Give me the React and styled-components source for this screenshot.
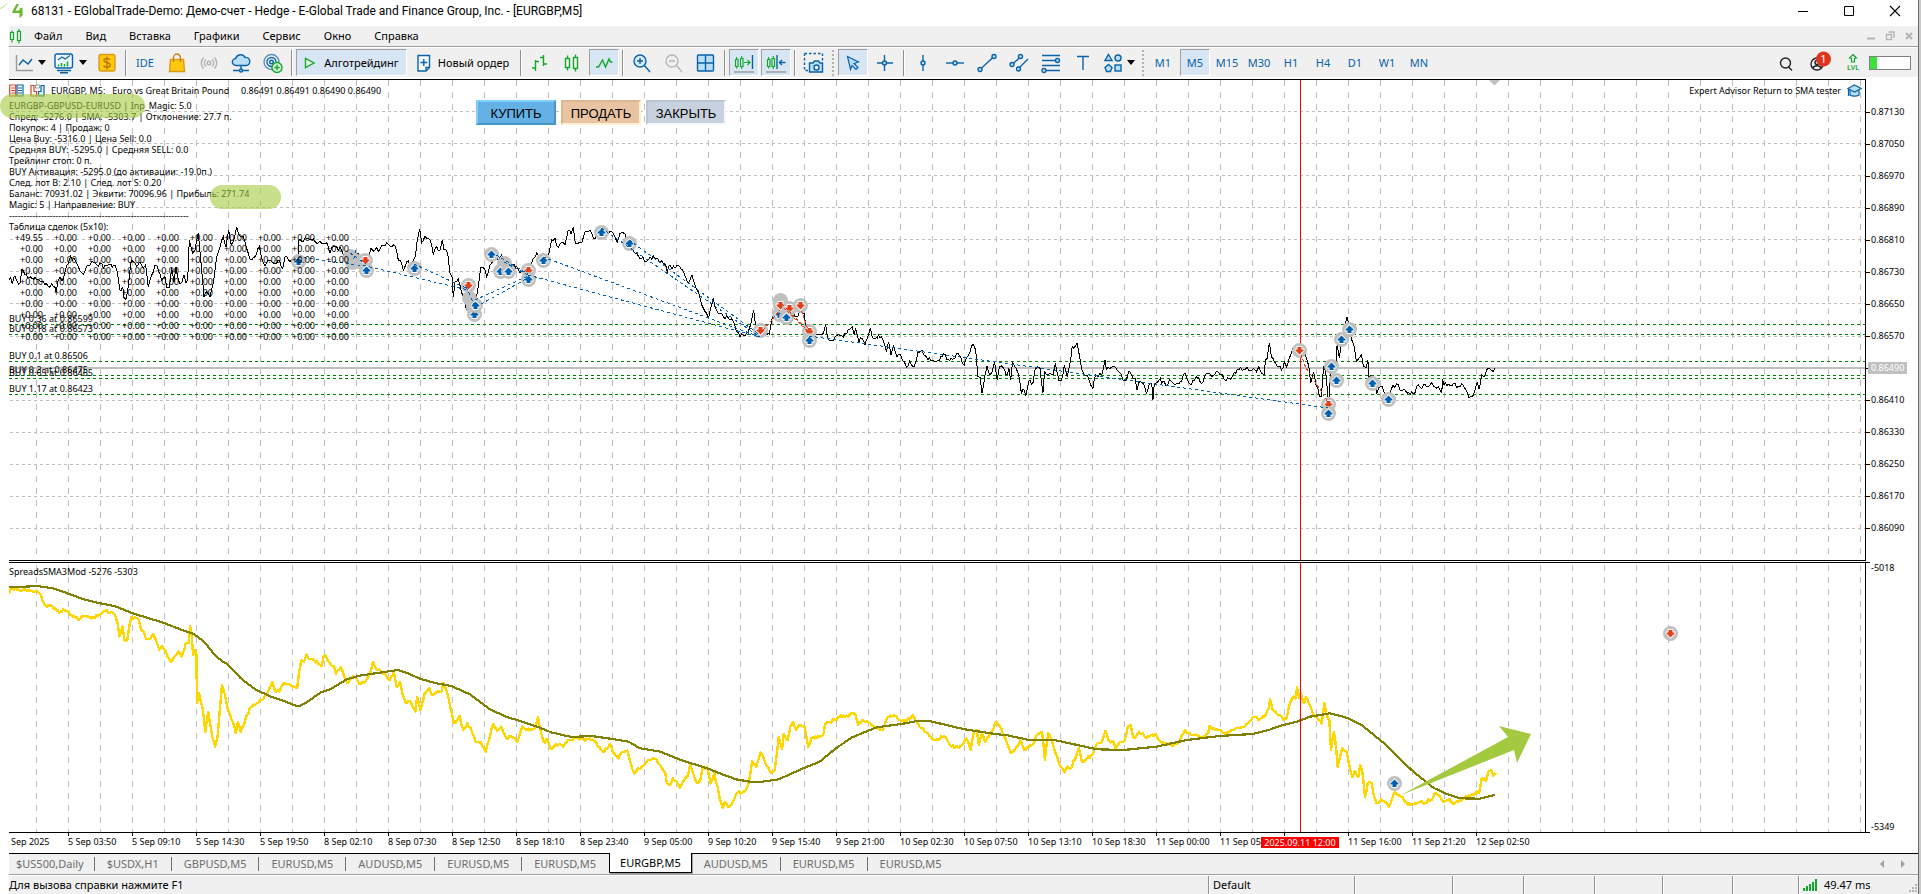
import React from 'react';
import styled, { createGlobalStyle, css } from 'styled-components';

const UI = '"Noto Sans", "Open Sans", sans-serif';
const BLUE = '#0a62a9';
const SKY = '#b9def5';
const GREEN = '#12a82b';
const GRID = '#c0c0c0';

const GlobalStyle = createGlobalStyle`
  *, *::before, *::after { box-sizing: border-box; }
  body { margin: 0; background: #fff; color: #000; font: 11px/16px ${UI}; }
  button { font: inherit; color: inherit; margin: 0; padding: 0; border: 0; background: none; white-space: nowrap; }
  svg { display: block; flex: none; }
`;

/* ---------- window frame ---------- */

const Window = styled.div`
  display: flex;
  flex-direction: column;
  min-height: 100vh;
  padding-left: 9px;
  border-right: 2px solid #c9c9c9;
  overflow: hidden;
`;

const Inner = styled.div`
  display: flex;
  flex-direction: column;
  flex: 1;
  min-width: 0;
  border-right: 1px solid #6e6e6e;
`;

const TitleBar = styled.header`
  position: relative;
  display: flex;
  align-items: center;
  height: 26px;
  padding: 0 0 4px 3px;
  gap: 8px;
  font: 12px/16px Roboto, sans-serif;
`;

const Title = styled.h1`
  flex: 1;
  margin: 0;
  font: inherit;
  white-space: nowrap;
`;

const Stroke = styled.svg`
  position: absolute;
  left: -9px;
  top: 3px;
`;

const FrameButtons = styled.div`
  display: flex;
`;

const FrameButton = styled.button`
  display: flex;
  align-items: center;
  justify-content: center;
  width: ${(p) => (p.$small ? 19 : 46)}px;
  height: 20px;
`;

const MenuBar = styled.nav`
  display: flex;
  align-items: center;
  height: 21px;
  gap: 23px;
  background: #f0f0f0;
  border-bottom: 1px solid #a0a0a0;

  svg + button { margin-left: -11px; }
  > div { margin-left: auto; }
`;

/* ---------- toolbar ---------- */

const ToolBar = styled.div`
  display: flex;
  align-items: center;
  gap: 2px;
  height: 30px;
  margin-bottom: 2px;
  padding-left: 3px;
  background: #f0f0f0;
  border-top: 1px solid #fff;
  color: ${BLUE};
`;

const Tool = styled.button`
  display: flex;
  align-items: center;
  justify-content: center;
  gap: ${(p) => p.$gap ?? 5}px;
  flex: none;
  width: ${(p) => p.$w ?? 30}px;
  height: 27px;
  border: 1px solid transparent;
  color: ${(p) => (p.$dark ? '#000' : BLUE)};
  ${(p) =>
    p.$on &&
    css`
      background: #d8e5f2;
      border-color: #a0a0a0 #fff #fff #a0a0a0;
    `}
`;

const Divider = styled.span`
  flex: none;
  width: 4px;
  height: 26px;
  background: linear-gradient(90deg, transparent 1px, #909090 1px, #909090 2px, #fff 2px, #fff 3px, transparent 3px);
`;

const Grip = styled.span`
  flex: none;
  width: 5px;
  height: 26px;
  border-left: 2px dotted #b4b4b4;
  margin-left: 1px;
  margin-right: -1px;
`;

const Caret = styled.span`
  border: 4px solid transparent;
  border-top: 5px solid #000;
  border-bottom: 0;
`;

const Account = styled.div`
  display: flex;
  align-items: center;
  gap: 7px;
  margin-left: auto;
  padding-right: 7px;
`;

const Meter = styled.span`
  width: 42px;
  height: 14px;
  border: 1px solid #808080;
  background: linear-gradient(90deg, #3ee03e 7px, #fff 7px);
`;

/* ---------- chart ---------- */

const Charts = styled.main`
  display: flex;
  flex-direction: column;
  flex: 1;
  font-size: 9px;
  line-height: 11px;
  white-space: pre;
`;

const PaneRow = styled.section`
  display: flex;
  flex: ${(p) => p.$size} 0 ${(p) => p.$size}px;
  margin-bottom: ${(p) => p.$gap ?? 0}px;
`;

const Pane = styled.div`
  position: relative;
  flex: 1;
  min-width: 0;
  border: solid #000;
  border-width: 1px 1px 1px 0;
`;

const Canvas = styled.svg`
  position: absolute;
  inset: 0;
  width: 100%;
  height: 100%;
`;

const Front = styled.div`
  position: relative;
  padding-top: ${(p) => p.$top ?? 0}px;
`;

const PaneHead = styled.div`
  display: flex;
  align-items: center;
  height: 20px;
  gap: 6px;
  padding-right: 3px;

  > :nth-child(4) { margin-left: auto; }
`;

const InfoLine = styled.p`
  margin: 0;
`;

const DealTable = styled.table`
  border-collapse: collapse;
  td { width: 34px; padding: 0; line-height: 11px; text-align: right; }
`;

const TradeButtons = styled.div`
  position: absolute;
  left: 467px;
  top: 20px;
  display: flex;
  gap: 5px;
`;

const tones = {
  buy: ['#63b1e5', '#7fd0ff', '#4795c9'],
  sell: ['#e8c4a2', '#dfb78f', '#fff1cf'],
  close: ['#c8d2de', '#b9c6d6', '#f4f8fc'],
};

const TradeButton = styled.button`
  width: 80px;
  height: 25px;
  padding-top: 3px;
  border: 2px solid;
  background: ${(p) => tones[p.$tone][0]};
  border-color: ${(p) => `${tones[p.$tone][1]} ${tones[p.$tone][2]} ${tones[p.$tone][2]} ${tones[p.$tone][1]}`};
  font: 13px/18px "Liberation Sans", Arial, sans-serif;
`;

const Highlight = styled.span`
  position: absolute;
  left: ${(p) => p.$x}px;
  top: ${(p) => p.$y}px;
  width: ${(p) => p.$w}px;
  height: 24px;
  border-radius: 12px;
  background: rgba(163, 202, 63, 0.6);
`;

const Scale = styled.div`
  display: flex;
  flex-direction: column;
  flex: none;
  width: 52px;
  padding-top: ${(p) => (p.$ends ? 0 : 17)}px;
  justify-content: ${(p) => (p.$ends ? 'space-between' : 'flex-start')};
`;

const Price = styled.div`
  display: flex;
  align-items: center;
  height: ${(p) => (p.$end ? 12 : 32)}px;

  &::before {
    content: '';
    width: ${(p) => (p.$now ? 2 : 4)}px;
    height: 1px;
    background: #000;
    align-self: ${(p) => p.$end ?? 'center'};
  }
  span {
    padding: 0 ${(p) => (p.$now ? 3 : 1)}px;
    line-height: 12px;
    ${(p) => p.$now && 'background: #c0c0c0; color: #fff;'}
  }
`;

const TimeAxis = styled.div`
  position: relative;
  display: flex;
  flex: none;
  height: 20px;
  overflow: hidden;
`;

const Time = styled.span`
  flex: none;
  width: ${(p) => (p.$first ? 59 : 64)}px;
  padding-left: ${(p) => (p.$first ? 2 : 0)}px;

  &::before {
    content: '';
    display: block;
    width: 1px;
    height: 3px;
    background: ${(p) => (p.$first ? 'none' : '#000')};
  }
`;

const CursorTime = styled.span`
  position: absolute;
  left: 1252px;
  top: 4px;
  width: 78px;
  text-align: center;
  background: #f00;
  color: #fff;
`;

/* ---------- bottom bars ---------- */

const Tabs = styled.div`
  display: flex;
  align-items: center;
  height: 23px;
  padding-bottom: 2px;
  background: #f0f0f0;
  border-top: 1px solid #000;
  border-bottom: 1px solid #fff;
  box-shadow: inset 0 -1px #a0a0a0;
  color: #6d6d6d;
`;

const Tab = styled.button`
  height: 14px;
  line-height: 14px;
  padding: 0 12px;
  border-right: 1px solid #6d6d6d;

  &:first-child { padding: 0 10px 0 7px; }

  ${(p) =>
    p.$plain &&
    css`
      border-right-color: transparent;
    `}
  ${(p) =>
    p.$on &&
    css`
      align-self: flex-start;
      height: 20px;
      line-height: 18px;
      margin-top: -1px;
      padding: 0 10px;
      background: #fff;
      color: #000;
      border: solid #000;
      border-width: 0 1px 1px;
      box-shadow: 1px 1px #a0a0a0;
    `}
`;

const TabArrows = styled.div`
  display: flex;
  gap: 17px;
  margin-left: auto;
  padding-right: 13px;
`;

const StatusBar = styled.footer`
  display: flex;
  align-items: stretch;
  height: 18px;
  background: #f0f0f0;
  line-height: 18px;
  white-space: nowrap;
`;

const Cell = styled.div`
  position: relative;
  display: flex;
  align-items: center;
  gap: 6px;
  flex: ${(p) => (p.$w ? `0 0 ${p.$w}px` : '1')};
  padding-left: 4px;
  border-left: ${(p) => (p.$w ? '1px solid #909090' : '0')};
  box-shadow: ${(p) => (p.$w ? 'inset 1px 0 #fff' : 'none')};
  ${(p) => !p.$w && 'padding-left: 0;'}

  > :nth-child(3) { margin-left: auto; align-self: flex-end; }
`;

/* ---------- icons ---------- */

function Icon({ w = 22, h = 22, children }) {
  return (
    <svg width={w} height={h} viewBox={`0 0 ${w} ${h}`} fill="none" stroke={BLUE} strokeWidth="1.4" aria-hidden="true">
      {children}
    </svg>
  );
}

const icons = {
  chart: (
    <Icon w={18}>
      <path d="M1.5 3v15.5H18" stroke="#9a9a9a" />
      <path d="M4 13l4-5 5 4 4-5" />
    </Icon>
  ),
  template: (
    <Icon w={20}>
      <rect x="1" y="2" width="17.5" height="14" rx="2" fill="#eef7fd" />
      <path d="M4 8l4-3 3 2 5-3.5" strokeWidth="1.1" />
      <path d="M4.5 14.500v-2M7.500 14.500v-3.500M10.500 14.500v-2.500M13.500 14.500V9.500" stroke={GREEN} strokeWidth="1.5" />
      <path d="M3 18.500h14M6 20.800h8" />
    </Icon>
  ),
  dollar: (
    <Icon w={18}>
      <rect x="1" y="2.5" width="16" height="16.5" rx="2" fill="#ffc70f" stroke="#d99a1b" />
      <path d="M12 8c-.5-1.200-1.600-1.700-3-1.700-1.700 0-3 .8-3 2.200 0 3.200 6.200 1.200 6.200 4.500 0 1.500-1.400 2.300-3.200 2.300-1.600 0-2.900-.7-3.200-2M9 4.500v13" stroke="#b87400" strokeWidth="1.3" />
    </Icon>
  ),
  bag: (
    <Icon w={18}>
      <path d="M2.500 7.500h13l1 12h-15z" fill="#ffc70f" stroke="#d99a1b" />
      <path d="M5.500 10V6a3.500 4 0 0 1 7 0v4" stroke="#c98212" />
    </Icon>
  ),
  signal: (
    <Icon w={20}>
      <g stroke="#b2b2b2">
        <circle cx="10" cy="11" r="1.800" />
        <path d="M6.800 7.500a5 5 0 0 0 0 7M13.200 7.500a5 5 0 0 1 0 7M4.500 5.500a8 8 0 0 0 0 11M15.500 5.500a8 8 0 0 1 0 11" />
      </g>
    </Icon>
  ),
  cloud: (
    <Icon w={20}>
      <path d="M5 13.500a3.500 3.500 0 0 1-.3-7A5 5 0 0 1 14 5.500a4 4 0 0 1 1.500 8z" fill={SKY} />
      <path d="M10 13.500V17M2 18.500h16" />
      <circle cx="10" cy="18.500" r="1.500" fill={SKY} />
    </Icon>
  ),
  vps: (
    <Icon w={20}>
      <circle cx="8.500" cy="10" r="7.500" stroke="#5a8fb8" />
      <circle cx="8.500" cy="10" r="4.500" fill="#e8f4fc" />
      <circle cx="8.500" cy="10" r="1.800" />
      <circle cx="14" cy="15.500" r="5" fill="#dff6e2" stroke={GREEN} />
      <path d="M14 12.800v5.400M11.300 15.500h5.400" stroke={GREEN} />
    </Icon>
  ),
  play: (
    <Icon w={12}>
      <path d="M1.500 6.500v9l8.500-4.500z" stroke={GREEN} fill="#e6f8e8" />
    </Icon>
  ),
  order: (
    <Icon w={14}>
      <path d="M1 3.500h11.500v12l-3.500 3.500H1z" fill="#f4fafe" />
      <path d="M12.500 15.500H9V19M6.800 7v7M3.300 10.500h7" />
    </Icon>
  ),
  bars: (
    <Icon w={18}>
      <path d="M4.500 8v11M1 16h3.500M4.500 9.500H8M12.500 3v11M9 5.500h3.500M12.500 12H16" stroke={GREEN} />
    </Icon>
  ),
  candles: (
    <Icon w={16}>
      <g stroke={GREEN}>
        <rect x="1.500" y="6.500" width="4" height="9" />
        <path d="M3.500 3.500v3M3.500 15.500v3M11.500 2.500v3M11.500 16.500v3" />
        <rect x="9.500" y="5.500" width="4" height="11" />
      </g>
    </Icon>
  ),
  line: (
    <Icon w={20}>
      <path d="M2 15h2.500l4-7 3 7 3.500-8 1.500 3h2" stroke={GREEN} />
    </Icon>
  ),
  zoomIn: (
    <Icon w={20}>
      <circle cx="8" cy="9" r="6" fill="#d5ecfa" />
      <path d="M12.500 13.500L18 20M8 6v6M5 9h6" />
    </Icon>
  ),
  zoomOut: (
    <Icon w={20}>
      <g stroke="#b8b8b8">
        <circle cx="8" cy="9" r="6" />
        <path d="M12.500 13.500L18 20M5 9h6" />
      </g>
    </Icon>
  ),
  tile: (
    <Icon w={20}>
      <rect x="1.500" y="3" width="16" height="16" rx="1" fill={SKY} />
      <path d="M9.500 3v16M1.500 11h16" />
    </Icon>
  ),
  scroll: (
    <Icon w={20}>
      <path d="M1.500 7.500h2.500v7H1.500zM6.500 6.500H9v8H6.500zM2.700 5v2.500M2.700 14.500v2M7.700 4v2.500M7.700 14.500V17M10 10.500h6M13.500 8l2.500 2.500-2.500 2.500" stroke={GREEN} strokeWidth="1.2" />
      <path d="M18.500 3v14" />
      <path d="M0 20h20" stroke="#9a9a9a" />
    </Icon>
  ),
  shift: (
    <Icon w={20}>
      <path d="M1.500 7.500h2.500v7H1.500zM6 6.500h2.500v8H6zM2.700 5v2.500M2.700 14.500v2M7.200 4v2.500M7.200 14.500V17" stroke={GREEN} strokeWidth="1.2" />
      <path d="M11 3v14M13.500 10.500h6M16 8l-2.500 2.500 2.500 2.500" />
      <path d="M0 20h20" stroke="#9a9a9a" />
    </Icon>
  ),
  camera: (
    <Icon w={22}>
      <path d="M1.500 1.500h18v8M1.500 1.500v17h4" strokeDasharray="2.500 2" />
      <path d="M6.500 11h3.500l1.500-2h4l1.500 2h2.500v9h-13z" fill={SKY} />
      <circle cx="13.500" cy="15.500" r="2.500" fill="#fff" />
    </Icon>
  ),
  cursor: (
    <Icon w={16}>
      <path d="M2.500 4.500l11 5.500-4.500 1.500 4 4-2 2-4-4-1.500 4z" fill={SKY} strokeWidth="1.2" />
    </Icon>
  ),
  cross: (
    <Icon w={18}>
      <path d="M8.500 3v6M8.500 13v6M1 11h5.500M10.500 11H17" />
      <circle cx="8.500" cy="11" r="2" fill={SKY} />
    </Icon>
  ),
  vline: (
    <Icon w={8}>
      <path d="M4 3v16" />
      <circle cx="4" cy="11" r="2" fill={SKY} />
    </Icon>
  ),
  hline: (
    <Icon w={20}>
      <path d="M1 11h18" />
      <circle cx="10" cy="11" r="2" fill={SKY} />
    </Icon>
  ),
  trend: (
    <Icon w={20}>
      <path d="M3 17.500L17 4.500" />
      <circle cx="3" cy="17.500" r="2" fill={SKY} />
      <circle cx="17" cy="4.500" r="2" fill={SKY} />
    </Icon>
  ),
  channel: (
    <Icon w={20}>
      <path d="M3 12.500L12 4.500M8 18L19 7" />
      <circle cx="3" cy="12.500" r="2" fill={SKY} />
      <circle cx="11.500" cy="4.500" r="2" fill={SKY} />
      <circle cx="9.500" cy="17" r="2" fill={SKY} />
    </Icon>
  ),
  fibo: (
    <Icon w={20}>
      <path d="M1 3.500h18M1 8.500h14M1 13.500h18M5 18.500h14" />
      <circle cx="16.500" cy="8.500" r="2" fill={SKY} />
      <circle cx="3" cy="18.500" r="2" fill={SKY} />
    </Icon>
  ),
  text: (
    <Icon w={16}>
      <path d="M2 4.500h12M8 4.500V18" />
    </Icon>
  ),
  shapes: (
    <Icon w={18}>
      <path d="M4.500 2.500L8 8.500H1zM4.500 12.500L8 15.500 6.500 19.500h-4L1 15.500z" fill={SKY} />
      <circle cx="14" cy="6" r="3" fill={SKY} />
      <rect x="11" y="13" width="6" height="6" fill={SKY} />
    </Icon>
  ),
};

/* ---------- chart data ---------- */

// Each chunk: [originX, originY, unitsPerPxX, unitsPerPxY, "x,y x,y ..."]
const priceChunks = [
  [9, 200, 3, 3, '0,240 5,232 10,252 18,228 25,246 33,248 39,208 48,225 68,235 78,232 91,240 103,245 120,262 128,250 138,262 141,275 148,240 163,238 173,195 185,168 190,180 198,180 208,200 223,222 235,195 248,185 263,195 278,190 283,205 298,195 318,195 325,215 333,270 341,260 345,292 351,298 358,260 365,190 373,185 383,200 393,185 403,205 410,195 418,262 428,225 438,195 448,210 458,240 468,230 473,262 481,262 488,205 495,245 501,200 508,240 518,248 525,225 531,250 536,240 541,120 551,160 558,150 568,100 576,190 585,290 593,275 603,290 613,250 623,170 633,140 643,110 651,140 659,90 665,130 673,125 683,80 689,105 703,110 718,160 728,180 738,170 751,140 758,175 768,198 778,180 793,190 808,180 821,205 828,170 843,185 858,185 868,190 870,120 878,125 893,115 908,120 918,125 933,122 953,128 963,160 973,140 988,150 998,150 1008,175 1023,180 1048,160 1068,200 1078,165 1086,145 1098,150'],
  [380, 210, 3, 3, '0,118 10,105 20,97 30,108 45,108 55,150 65,160 70,182 80,155 90,165 100,150 106,140 112,90 119,58 125,98 135,78 150,90 160,135 170,110 180,120 187,90 192,120 203,130 210,190 216,200 220,262 225,215 235,208 240,225 250,260 262,300 275,300 285,275 295,230 302,172 315,180 320,200 330,165 340,145 355,150 365,135 372,150 390,160 410,170 420,190 435,185 450,170 460,145 470,128 480,135 495,150 507,130 515,90 525,85 530,108 545,98 555,105 565,60 573,72 580,52 586,100 600,98 605,98 615,65 630,60 640,85 655,75 670,55 680,70 695,65 705,82 712,97 720,70 730,68 740,90 755,110 770,130 785,145 798,155 810,140 825,145 840,158 850,160 862,185 868,165 885,175 900,170 912,190 920,210 928,215 936,195 945,225 955,245 965,285 975,305 985,328 995,285 1000,265 1005,290 1020,310 1030,320 1040,318 1050,330 1060,335 1068,360 1080,380 1090,375 1095,378 1105,365 1115,330 1121,300 1126,340 1140,370 1155,378 1168,372 1175,330 1190,310 1205,270 1220,300 1235,300 1250,320 1260,300 1272,310 1280,360 1300,370 1320,372 1330,370 1337,345 1342,378 1352,392 1365,380 1375,374 1385,378 1395,370 1405,358'],
  [850, 280, 2.8, 3, '0,148 6,140 12,165 15,145 25,185 35,175 42,195 50,170 57,145 65,175 80,165 92,180 102,215 108,185 115,225 122,195 132,230 142,225 152,245 158,262 167,245 172,255 180,260 190,218 202,212 215,232 230,242 240,245 250,242 262,222 275,238 290,235 298,222 310,232 320,255 335,220 345,193 352,210 358,290 364,292 370,340 378,285 384,258 392,285 398,275 405,245 412,300 418,262 428,262 437,285 445,265 450,300 455,245 465,265 475,300 480,340 488,330 492,348 500,305 512,310 518,270 525,260 532,265 540,340 545,275 555,285 568,285 575,250 585,300 592,300 600,255 608,290 618,240 622,200 630,200 636,190 642,225 650,270 658,285 665,285 672,310 680,325 688,285 695,290 705,285 714,240 718,268 732,262 745,265 758,280 765,302 775,295 780,275 788,285 798,295 804,330 812,302 822,310 830,340 838,310 845,310 848,360 852,310 865,300 880,305 888,318 895,300 905,310 925,305 938,280 945,300 955,315 965,300 975,292 988,308 1000,280 1010,285 1025,275 1035,282 1050,300 1065,298 1080,280 1090,268 1105,270 1112,262 1120,272 1130,265 1138,275 1145,260 1150,275 1160,283 1163,240 1168,235 1174,188 1180,230 1192,250 1205,260 1208,270 1216,245 1222,260 1230,235 1240,205 1255,200 1275,225 1285,260 1290,310 1298,275 1305,315 1315,350 1320,350 1326,258 1332,275 1335,310 1340,370 1345,290 1350,260 1362,250 1364,190 1370,235 1378,180 1385,140 1392,110 1400,160 1405,180 1412,200 1418,245 1425,235 1432,225 1438,260 1445,262 1450,240 1453,290 1465,295 1475,340 1485,320 1495,335 1505,350 1515,330 1520,315 1525,322 1530,312 1540,330 1550,328 1560,340'],
  [1280, 290, 3, 3, '395,305 405,308 410,290 420,292 430,285 440,290 450,285 455,278 462,290 470,295 480,300 485,308 488,268 492,285 505,282 512,288 520,280 535,290 545,282 558,300 567,325 575,320 585,300 592,275 597,298 605,255 612,262 620,238 628,235 635,242 645,235'],
];

const spreadChunks = [
  [0, 540, 2.45, 3, '22,162 30,143 42,150 55,152 62,148 75,152 92,155 100,165 105,185 115,200 125,195 135,205 145,218 155,208 165,212 175,225 185,232 195,238 205,228 220,232 240,228 258,212 270,218 282,225 288,250 293,290 300,260 305,300 312,300 318,250 322,232 330,232 340,240 346,270 352,275 358,298 368,298 375,282 382,300 390,330 398,318 408,340 418,365 428,348 438,335 445,350 455,310 462,310 466,258 470,290 473,345 478,330 481,340 483,490 488,460 497,510 503,575 510,515 520,590 527,620 533,590 540,490 544,435 550,460 560,515 570,545 578,580 583,545 590,575 598,555 605,525 615,500 625,495 640,480 650,465 660,445 667,425 675,455 685,455 692,435 705,432 722,440 728,445 733,395 738,362 745,365 751,343 758,358 770,360 780,372 788,378 793,348 800,352 810,372 818,378 823,402 835,380 843,408 852,430 862,410 870,412 880,432 892,428 900,415 908,395 914,365 922,388 935,395 945,405 955,420 965,395 972,440 980,425 985,455 995,490 1005,482 1018,515 1022,470 1030,510 1040,462 1052,445 1058,465 1070,455 1082,455 1086,428 1095,455 1103,500 1112,550 1120,540 1126,528 1135,570 1145,550 1155,570 1165,605 1178,605 1190,635 1198,600 1208,552 1218,572 1228,560 1240,595 1255,590 1268,605 1280,560 1290,570 1302,568 1312,560 1318,530 1325,575 1332,605 1342,600 1350,628 1362,612 1380,620 1395,600 1410,595 1430,598 1445,595 1458,605 1465,620 1480,635 1495,612 1502,640 1515,655 1525,635 1537,632 1543,660 1550,690 1555,700 1562,685'],
  [640, 640, 2.45, 3, '0,388 10,375 25,360 40,358 50,375 62,400 65,425 73,435 80,415 90,425 98,443 108,420 118,405 123,372 130,400 140,430 148,420 153,385 160,385 165,380 173,430 182,400 190,440 195,475 203,505 208,485 216,500 228,485 240,455 250,458 262,445 270,405 275,362 285,382 295,338 303,355 315,385 320,398 330,390 335,345 340,290 348,328 352,283 362,300 368,262 375,245 383,270 390,255 403,260 412,322 420,295 430,290 440,290 450,280 453,255 465,245 482,240 492,225 502,232 517,220 528,225 535,255 545,240 560,248 572,258 595,270 608,230 625,228 635,240 650,242 660,238 668,225 678,245 690,265 705,280 715,295 728,298 745,288 755,305 770,325 785,318 800,295 810,330 818,275 825,270 830,315 838,280 845,305 855,290 865,270 873,245 885,265 895,295 908,338 920,325 932,300 942,330 952,322 965,308 972,285 985,275 992,360 1000,280 1008,300 1018,340 1030,380 1040,398 1048,380 1055,385 1065,360 1075,325 1083,365 1095,355 1108,345 1118,315 1130,310 1140,272 1150,305 1160,305 1165,325 1178,305 1188,300 1195,260 1202,255 1210,295 1222,275 1232,280 1240,295 1252,285 1265,285 1275,305 1290,310 1305,318 1318,310 1328,285 1335,270 1350,285 1365,285 1378,293 1392,280 1395,258 1410,270 1422,270 1435,282 1450,270 1470,265 1490,250 1505,230 1515,240 1530,230 1540,205 1544,178 1550,210 1560,222'],
  [1180, 640, 3, 3, '300,225 310,240 320,235 327,200 340,170 347,175 351,142 358,175 362,160 372,190 378,172 390,195 400,225 410,230 425,250 433,190 440,225 448,240 453,330 462,275 468,320 473,380 480,350 487,325 500,335 507,372 517,412 525,392 535,410 541,375 547,395 555,470 563,430 575,430 582,470 590,490 603,478 615,485 627,500 635,480 645,455 655,465 668,472 683,495 705,490 720,485 735,490 745,478 755,480 765,458 775,465 790,485 805,480 825,490 840,480 860,470 880,465 890,455 897,460 905,415 918,422 925,395 935,392 940,408 947,398'],
];

const smaChunks = [
  [0, 540, 2.45, 3, '22,141 60,140 90,138 130,145 165,160 205,178 245,190 280,198 325,220 400,248 450,272 475,282 500,305 530,350 545,364 555,370 590,415 625,448 660,468 700,485 725,497 735,497 750,488 785,458 810,447 850,418 880,407 930,398 975,390 1000,400 1030,417 1070,430 1105,438 1150,462 1200,508 1240,530 1280,545 1320,562 1350,577 1400,591 1450,588 1500,597 1540,605'],
  [640, 640, 2.45, 3, '0,325 50,335 100,360 165,385 200,402 235,418 270,425 300,425 340,418 400,385 440,365 480,325 520,292 580,262 640,252 680,243 710,243 750,255 795,268 870,282 900,286 950,299 1015,300 1060,312 1120,328 1185,330 1265,320 1340,300 1420,288 1500,282 1540,270'],
  [1180, 640, 3, 3, '300,258 350,245 390,230 450,220 500,233 545,255 610,308 700,395 760,443 800,462 840,475 900,476 945,465'],
];

function decode(chunks) {
  return chunks.flatMap(([ox, oy, sx, sy, text]) =>
    text.split(' ').map((pair) => {
      const [x, y] = pair.split(',').map(Number);
      return [ox + x / sx, oy + y / sy];
    })
  );
}

// Fills the space between turning points with small tick-by-tick moves.
function withTicks(points, swing) {
  let seed = 7;
  const random = () => {
    seed = (seed * 16807) % 2147483647;
    return seed / 2147483647 - 0.5;
  };
  const out = [];
  points.forEach(([x, y], i) => {
    out.push([x, y]);
    const next = points[i + 1];
    if (!next) return;
    const steps = Math.floor((next[0] - x) / 1.3);
    for (let k = 1; k < steps; k += 1) {
      const t = k / steps;
      out.push([x + (next[0] - x) * t, y + (next[1] - y) * t + random() * swing]);
    }
  });
  return out;
}

const toPath = (points) => 'M' + points.map(([x, y]) => `${x.toFixed(1)} ${y.toFixed(1)}`).join('L');

const pricePath = toPath(withTicks(decode(priceChunks), 5));
const spreadPath = toPath(withTicks(decode(spreadChunks), 3));
const smaPath = toPath(decode(smaChunks));

const gridColumns = Array.from({ length: 110 }, (_, i) => 36.5 + i * 32);
const gridRows = [111, 143, 175, 207, 239, 271, 303, 336, 368, 400, 432, 464, 496, 528];

const orders = [
  [324, 'BUY 0.36 at 0.86599'],
  [334, 'BUY 0.18 at 0.86573'],
  [361, 'BUY 0.1 at 0.86506'],
  [375, 'BUY 0.3 at 0.86475'],
  [378, 'BUY 0.65 at 0.86465'],
  [394, 'BUY 1.17 at 0.86423'],
];

const markers = [
  ['n', 350, 256], ['n', 352, 262], ['n', 359, 261], ['s', 365, 260], ['b', 366, 270], ['b', 298, 261],
  ['b', 414, 268], ['s', 468, 285], ['n', 469, 298], ['n', 473, 307], ['b', 474, 314], ['b', 475, 305],
  ['b', 491, 254], ['n', 504, 263], ['b', 500, 271], ['b', 508, 271], ['s', 528, 270], ['b', 528, 279],
  ['b', 543, 260], ['b', 601, 232], ['b', 629, 243], ['s', 760, 330], ['n', 780, 300], ['b', 779, 314],
  ['s', 780, 305], ['s', 789, 308], ['b', 786, 317], ['s', 800, 305], ['s', 809, 331], ['b', 809, 340],
  ['s', 1299, 350], ['s', 1328, 404], ['b', 1328, 413], ['b', 1331, 366], ['b', 1336, 380], ['b', 1349, 329],
  ['b', 1341, 339], ['b', 1372, 383], ['b', 1388, 399],
];

const buyTrails = 'M298 257L366 266L468 290M350 253L366 264M356 250L353 262M414 264L468 289M475 300L528 276M481 304L528 278M491 252L528 274M504 262L528 275M528 275L760 337M543 257L760 337M601 228L760 337M629 240L760 335M466 287L475 306M809 336L1328 408';
const sellTrails = 'M760 334L780 310M780 304L809 333M782 304L810 333M800 306L809 333M1299 350L1306 368L1328 402';

function Marker({ kind, x, y }) {
  return (
    <g transform={`translate(${x} ${y})`}>
      <circle r="7.5" fill={GRID} />
      {kind !== 'n' && (
        <path
          d="M0 -4L4 0V1H2V3.500H-2V1H-4V0z"
          transform={kind === 's' ? 'scale(1 -1)' : undefined}
          fill={kind === 's' ? '#e2401b' : '#0060b0'}
          stroke="#fff"
          strokeWidth="1.8"
          paintOrder="stroke"
        />
      )}
    </g>
  );
}

function Columns({ top, bottom }) {
  return gridColumns.map((x) => (
    <path key={x} d={`M${x} ${top}V${bottom}`} stroke={GRID} strokeDasharray="6 6" shapeRendering="crispEdges" />
  ));
}

function PriceCanvas() {
  return (
    <Canvas role="img" aria-label="EURGBP M5">
      <g transform="translate(-9 -80)" fill="none">
        <Columns top={80} bottom={2000} />
        {gridRows.map((y) => (
          <path key={y} d={`M10 ${y + 0.5}H4000`} stroke={GRID} strokeDasharray="3 3" shapeRendering="crispEdges" />
        ))}
        <path d="M1489 80h11l-5.500 5.500z" fill={GRID} />
        <path d="M9 368H4000" stroke={GRID} strokeWidth="2" shapeRendering="crispEdges" />
        {orders.map(([y, label]) => (
          <g key={y}>
            <path d={`M9 ${y + 0.5}H4000`} stroke="#008000" strokeDasharray="3 3" shapeRendering="crispEdges" />
            <text x="9" y={y - 2} fill="#000">{label}</text>
          </g>
        ))}
        <path d={pricePath} stroke="#000" strokeWidth="1" shapeRendering="crispEdges" />
        <path d="M1300.500 80V2000" stroke="#f00" shapeRendering="crispEdges" />
        {markers.map(([kind, x, y]) => (
          <Marker key={`${kind}${x}${y}`} kind={kind} x={x + 0.5} y={y + 0.5} />
        ))}
        <path d={buyTrails} stroke="#0060b0" strokeDasharray="3 3" shapeRendering="crispEdges" />
        <path d={sellTrails} stroke="#e2401b" strokeDasharray="3 2" shapeRendering="crispEdges" />
      </g>
    </Canvas>
  );
}

function SpreadCanvas() {
  return (
    <Canvas role="img" aria-label="SpreadsSMA3Mod">
      <g transform="translate(-9 -563)" fill="none">
        <Columns top={565} bottom={2000} />
        <path d={spreadPath} stroke="#ffd700" strokeWidth="2.4" strokeLinejoin="round" shapeRendering="crispEdges" />
        <path d={smaPath} stroke="#808000" strokeWidth="2.2" strokeLinejoin="round" shapeRendering="crispEdges" />
        <path d="M1300.500 560V2000" stroke="#f00" shapeRendering="crispEdges" />
        <Marker kind="b" x={1394.5} y={783.5} />
        <Marker kind="s" x={1670.5} y={633.5} />
        <path d="M1401 795L1508 737L1499 726L1531 734L1517 763L1514 750z" fill="#a3ca3f" />
      </g>
    </Canvas>
  );
}

/* ---------- content ---------- */

const infoLines = [
  'EURGBP-GBPUSD-EURUSD | Inp_Magic: 5.0',
  'Спред: -5276.0 | SMA: -5303.7 | Отклонение: 27.7 п.',
  'Покупок: 4 | Продаж: 0',
  'Цена Buy: -5316.0 | Цена Sell: 0.0',
  'Средняя BUY: -5295.0 | Средняя SELL: 0.0',
  'Трейлинг стоп: 0 п.',
  'BUY Активация: -5295.0 (до активации: -19.0п.)',
  'След. лот B: 2.10 | След. лот S: 0.20',
  'Баланс: 70931.02 | Эквити: 70096.96 | Прибыль: 271.74',
  'Magic: 5 | Направление: BUY',
  '-'.repeat(62),
  'Таблица сделок (5x10):',
];

const deals = Array.from({ length: 10 }, (_, r) =>
  Array.from({ length: 10 }, (_, c) => (r === 0 && c === 0 ? '+49.55' : '+0.00'))
);

const prices = ['0.87130', '0.87050', '0.86970', '0.86890', '0.86810', '0.86730', '0.86650', '0.86570', '0.86490', '0.86410', '0.86330', '0.86250', '0.86170', '0.86090'];

const times = ['Sep 2025', '5 Sep 03:50', '5 Sep 09:10', '5 Sep 14:30', '5 Sep 19:50', '8 Sep 02:10', '8 Sep 07:30', '8 Sep 12:50', '8 Sep 18:10', '8 Sep 23:40', '9 Sep 05:00', '9 Sep 10:20', '9 Sep 15:40', '9 Sep 21:00', '10 Sep 02:30', '10 Sep 07:50', '10 Sep 13:10', '10 Sep 18:30', '11 Sep 00:00', '11 Sep 05', '', '11 Sep 16:00', '11 Sep 21:20', '12 Sep 02:50'];

const tabs = ['$US500,Daily', '$USDX,H1', 'GBPUSD,M5', 'EURUSD,M5', 'AUDUSD,M5', 'EURUSD,M5', 'EURUSD,M5', 'EURGBP,M5', 'AUDUSD,M5', 'EURUSD,M5', 'EURUSD,M5'];

const frames = ['M1', 'M5', 'M15', 'M30', 'H1', 'H4', 'D1', 'W1', 'MN'];

const menus = ['Файл', 'Вид', 'Вставка', 'Графики', 'Сервис', 'Окно', 'Справка'];

function IconTool({ name, on }) {
  return (
    <Tool $on={on} aria-label={name}>
      {icons[name]}
    </Tool>
  );
}

const iconTools = (names, active = []) =>
  names.map((name) => <IconTool key={name} name={name} on={active.includes(name)} />);

export default function App() {
  return (
    <Window>
      <GlobalStyle />
      <Inner>
        <TitleBar>
          <Stroke width="8" height="8" viewBox="0 0 8 8" fill="none" aria-hidden="true">
            <path d="M0 5.500C3 4.500 5 3 7 0.500" stroke="#b9d98a" />
          </Stroke>
          <svg width="11" height="16" viewBox="0 0 11 16" aria-hidden="true">
            <path d="M4.500 1H7L3.500 7.500H7.500V5.500L10.500 4.500V12.500L7.500 15V10H0.500V8z" fill="#6ab82e" />
          </svg>
          <Title>68131 - EGlobalTrade-Demo: Демо-счет - Hedge - E-Global Trade and Finance Group, Inc. - [EURGBP,M5]</Title>
          <FrameButtons>
            <FrameButton aria-label="Minimize">
              <Icon w={12} h={12}><path d="M1 6.500h10" stroke="#000" strokeWidth="1" /></Icon>
            </FrameButton>
            <FrameButton aria-label="Maximize">
              <Icon w={12} h={12}><path d="M1.500 1.500h9v9h-9z" stroke="#000" strokeWidth="1" /></Icon>
            </FrameButton>
            <FrameButton aria-label="Close">
              <Icon w={12} h={12}><path d="M1 1l10 10M11 1L1 11" stroke="#000" strokeWidth="1.1" /></Icon>
            </FrameButton>
          </FrameButtons>
        </TitleBar>

        <MenuBar>
          <Icon w={13} h={16}>
            <path d="M1.500 4.500h3v7h-3zM8.500 3.500h3v9h-3zM3 2.500v2M3 11.500v3M10 1v2.500M10 12.500v3" stroke={GREEN} strokeWidth="1.2" />
          </Icon>
          {menus.map((m) => <button key={m}>{m}</button>)}
          <FrameButtons>
            <FrameButton $small aria-label="Minimize chart">
              <Icon w={10} h={10}><path d="M1 7.500h8" stroke="#b4b4b4" strokeWidth="2" /></Icon>
            </FrameButton>
            <FrameButton $small aria-label="Restore chart">
              <Icon w={10} h={10}><path d="M1.500 3.500h5v5h-5zM3.500 1h5.500v6" stroke="#b4b4b4" /></Icon>
            </FrameButton>
            <FrameButton $small aria-label="Close chart">
              <Icon w={10} h={10}><path d="M2 2l6 6M8 2L2 8" stroke="#b4b4b4" strokeWidth="2" /></Icon>
            </FrameButton>
          </FrameButtons>
        </MenuBar>

        <ToolBar>
          <Tool $w={36} aria-label="Charts">{icons.chart}<Caret /></Tool>
          <Tool $w={40} aria-label="Templates">{icons.template}<Caret /></Tool>
          <IconTool name="dollar" />
          <Divider />
          <Tool>IDE</Tool>
          {iconTools(['bag', 'signal', 'cloud', 'vps'])}
          <Divider />
          <Tool $w={111} $gap={8} $on $dark>{icons.play}Алготрейдинг</Tool>
          <Tool $w={108} $gap={7} $dark>{icons.order}Новый ордер</Tool>
          <Divider />
          {iconTools(['bars', 'candles', 'line'], ['line'])}
          <Divider />
          {iconTools(['zoomIn', 'zoomOut', 'tile'])}
          <Divider />
          {iconTools(['scroll', 'shift'], ['scroll', 'shift'])}
          <Divider />
          <IconTool name="camera" />
          <Grip />
          {iconTools(['cursor', 'cross'], ['cursor'])}
          <Divider />
          {iconTools(['vline', 'hline', 'trend', 'channel', 'fibo', 'text'])}
          <Tool $w={39} aria-label="Shapes">{icons.shapes}<Caret /></Tool>
          <Grip />
          {frames.map((f) => <Tool key={f} $on={f === 'M5'}>{f}</Tool>)}
          <Account>
            <Tool $w={28} aria-label="Search">
              <Icon w={14}>
                <path d="M9.500 15l3.500 3.500" stroke="#222" />
                <circle cx="6.500" cy="11" r="5" stroke="#222" />
              </Icon>
            </Tool>
            <Tool aria-label="Account, 1 message">
              <Icon w={28} h={26}>
                <circle cx="9" cy="14" r="6" stroke="#222" />
                <circle cx="9" cy="12.500" r="2" stroke="#222" />
                <path d="M5 18c1-3 7-3 8 0" stroke="#222" />
                <circle cx="15.500" cy="9" r="7.500" fill="#e2341d" stroke="none" />
                <text x="15.500" y="13" textAnchor="middle" fontSize="11" fill="#fff" stroke="none">1</text>
              </Icon>
            </Tool>
            <Icon w={18} h={26}>
              <path d="M9 4.500l3.500 3.500-2 .5v3.500h-3V8.500l-2-.5z" stroke={GREEN} strokeWidth="1.2" />
              <text x="9" y="20" textAnchor="middle" fontSize="7" fontWeight="600" fill={GREEN} stroke="none">LVL</text>
            </Icon>
            <Meter />
          </Account>
        </ToolBar>

        <Charts>
          <PaneRow $size={482} $gap={1}>
            <Pane>
              <PriceCanvas />
              <Front>
                <PaneHead>
                  <Icon w={15} h={13}>
                    <path d="M0.700 1h6v11h-6zM2 4h4M2 6.500h4M2 9h4" stroke="#d9432f" strokeWidth="1.2" />
                    <path d="M8 1h6v11H8zM9 4h4M9 6.500h4M9 9h4" strokeWidth="1.2" />
                  </Icon>
                  <Icon w={15} h={13}>
                    <path d="M6.500 12h-5.500V1.500h3v6h2.500z" stroke="#d9432f" strokeWidth="1.2" />
                    <path d="M8.500 12H14V1.500h-3v6H8.500z" fill="#e1f1fb" strokeWidth="1.2" />
                    <path d="M5.500 1h4v3h-4z" stroke="#999" strokeWidth="1" />
                  </Icon>
                  <span>{'EURGBP, M5:   Euro vs Great Britain Pound     0.86491 0.86491 0.86490 0.86490'}</span>
                  <span>Expert Advisor Return to SMA tester</span>
                  <Icon w={15} h={13}>
                    <path d="M3 6v5c2 1.500 7 1.500 9 0V6M1.500 5v7" fill={SKY} strokeWidth="1.2" />
                    <path d="M0.800 4.500L7.500 1l6.700 3.500L7.500 8z" fill={SKY} strokeWidth="1.2" />
                  </Icon>
                </PaneHead>
                {infoLines.map((line) => <InfoLine key={line}>{line}</InfoLine>)}
                <DealTable>
                  <tbody>
                    {deals.map((row, r) => (
                      <tr key={r}>{row.map((v, c) => <td key={c}>{v}</td>)}</tr>
                    ))}
                  </tbody>
                </DealTable>
                <TradeButtons>
                  <TradeButton $tone="buy">КУПИТЬ</TradeButton>
                  <TradeButton $tone="sell">ПРОДАТЬ</TradeButton>
                  <TradeButton $tone="close">ЗАКРЫТЬ</TradeButton>
                </TradeButtons>
                <Highlight $x={-9} $y={14} $w={145} />
                <Highlight $x={201} $y={105} $w={71} />
              </Front>
            </Pane>
            <Scale>
              {prices.map((p) => <Price key={p} $now={p === '0.86490'}><span>{p}</span></Price>)}
            </Scale>
          </PaneRow>

          <PaneRow $size={271}>
            <Pane>
              <SpreadCanvas />
              <Front $top={3}>
                <InfoLine>SpreadsSMA3Mod -5276 -5303</InfoLine>
              </Front>
            </Pane>
            <Scale $ends>
              <Price $end="flex-start"><span>-5018</span></Price>
              <Price $end="flex-end"><span>-5349</span></Price>
            </Scale>
          </PaneRow>

          <TimeAxis>
            {times.map((t, i) => <Time key={t} $first={i === 0}>{t}</Time>)}
            <CursorTime>2025.09.11 12:00</CursorTime>
          </TimeAxis>
        </Charts>

        <Tabs>
          {tabs.map((t, i) => (
            <Tab key={i} $on={i === 7} $plain={i === 6 || i === 10}>{t}</Tab>
          ))}
          <TabArrows>
            <Icon w={4} h={8}><path d="M4 0v8L0 4z" fill="#a0a0a0" stroke="none" /></Icon>
            <Icon w={4} h={8}><path d="M0 0v8l4-4z" fill="#a0a0a0" stroke="none" /></Icon>
          </TabArrows>
        </Tabs>

        <StatusBar>
          <Cell>Для вызова справки нажмите F1</Cell>
          <Cell $w={146}>Default</Cell>
          <Cell $w={98} />
          <Cell $w={71} />
          <Cell $w={71} />
          <Cell $w={68} />
          <Cell $w={70} />
          <Cell $w={66} />
          <Cell $w={120}>
            <Icon w={15} h={12}>
              <path d="M1 12V9M4 12V7M7 12V5M10 12V3M13 12V0" stroke={GREEN} strokeWidth="2" />
            </Icon>
            <span>49.47 ms</span>
            <Icon w={10} h={10}>
              <path d="M7 1h2M4 4h2M7 4h2M1 7h2M4 7h2M7 7h2" stroke="#b4b4b4" strokeWidth="2" />
            </Icon>
          </Cell>
        </StatusBar>
      </Inner>
    </Window>
  );
}
